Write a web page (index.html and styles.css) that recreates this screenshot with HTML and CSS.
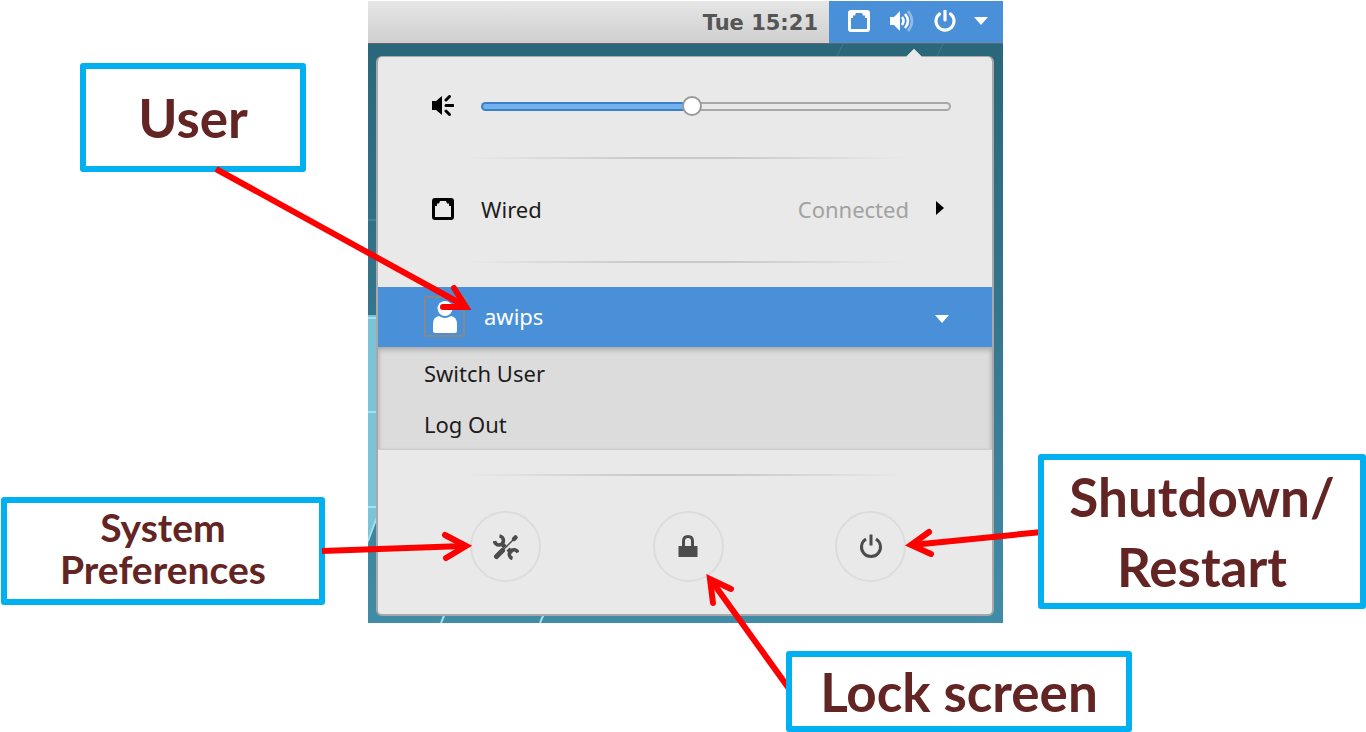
FILE: index.html
```html
<!DOCTYPE html>
<html lang="en">
<head>
<meta charset="utf-8">
<title>System menu</title>
<link rel="stylesheet" href="styles.css">
</head>
<body>
<main class="figure">
  <section class="screen">
    <header class="topbar">
      <time class="clock">Tue 15:21</time>
      <button class="tray" aria-label="System menu">
        <svg class="icon" viewBox="0 0 22 22"><rect x="1.5" y="1.5" width="19" height="19" rx="1.5" fill="none" stroke="#fff" stroke-width="3"/><path fill="#fff" d="M3 3h5l-1 2.500H5V8H3zM19 3h-5l1 2.500h2V8h2z"/></svg>
        <svg class="icon icon-volume" viewBox="0 0 24 22"><path fill="#fff" d="M0 7h4l6-6v20l-6-6H0z"/><g fill="none" stroke="#fff" stroke-width="2.600"><path d="M12 7q3 4 0 8"/><path d="M15 4q6 7 0 14"/><path d="M18 1q8 10 0 20" opacity=".4"/></g></svg>
        <svg class="icon" viewBox="0 0 22 22"><path fill="none" stroke="#fff" stroke-width="3.200" stroke-linecap="round" d="M11 1v9M5.500 4a9 9 0 1 0 11 0"/></svg>
        <svg class="caret" viewBox="0 0 14 8"><path fill="#fff" d="M0 0h14L7 8z"/></svg>
      </button>
    </header>
    <div class="desktop">
      <svg class="wallpaper" viewBox="0 0 635 579" preserveAspectRatio="none" aria-hidden="true">
        <defs>
          <linearGradient id="sea" x1="0" y1="0" x2="0" y2="1"><stop offset="0" stop-color="#2a677a"/><stop offset=".5" stop-color="#35778f"/><stop offset="1" stop-color="#418ca6"/></linearGradient>
        </defs>
        <rect width="635" height="579" fill="url(#sea)"/>
        <path fill="#7bc3d6" d="M0 271h12v190L0 500z"/>
        <path fill="none" stroke="#5391a7" d="M0 176h12"/>
        <path fill="none" stroke="#a0e2ee" stroke-width="2" d="M0 274h12M0 368h12M0 463h12M0 497l12-32M73 579l5-12M172 579l5-12"/>
        <path fill="none" stroke="#3b7d90" d="M469 12l6-12M569 12l6-12"/>
      </svg>
      <div class="menu">
        <div class="row row-sound">
          <svg class="icon" viewBox="0 0 22 22" aria-hidden="true"><path d="M0 6h4l6-5v19l-6-5H0z"/><path fill="none" stroke="#000" stroke-width="3" stroke-linecap="round" d="M14 5l3.500-3.500M14 10.500h7M14 16l3.500 3.500"/></svg>
          <input class="slider" type="range" min="0" max="1000" value="446" aria-label="Volume">
        </div>
        <hr class="divider">
        <button class="row row-network">
          <svg class="icon" viewBox="0 0 22 22" aria-hidden="true"><rect x="1.5" y="1.5" width="19" height="19" rx="1.5" fill="none" stroke="#000" stroke-width="3"/><path d="M3 3h5l-1 2.500H5V8H3zM19 3h-5l1 2.500h2V8h2z"/></svg>
          <span class="label">Wired</span>
          <span class="status">Connected</span>
          <svg class="arrow" viewBox="0 0 8 14" aria-hidden="true"><path d="M0 0l8 7-8 7z"/></svg>
        </button>
        <hr class="divider">
        <button class="row row-user" aria-expanded="true">
          <span class="avatar"><svg viewBox="0 0 26 32" aria-hidden="true"><circle cx="13" cy="7.500" r="7.500" fill="#fff"/><path fill="#fff" d="M1 30V23q0-7 6-8 6 4 12 0 6 1 6 8v7q0 2-2 2H3q-2 0-2-2z"/></svg></span>
          <span class="label">awips</span>
          <svg class="caret" viewBox="0 0 14 8" aria-hidden="true"><path fill="#fff" d="M0 0h14L7 8z"/></svg>
        </button>
        <div class="submenu">
          <button class="subitem">Switch User</button>
          <button class="subitem">Log Out</button>
        </div>
        <hr class="divider">
        <div class="actions">
          <button class="round" aria-label="System preferences">
            <svg viewBox="0 0 26 26"><g fill="none" stroke="#4c4c4c"><path stroke-width="5" stroke-linecap="round" d="M3.500 22.500l6-6"/><path stroke-width="1.500" d="M9 17L21 5"/><path stroke-width="4.500" stroke-linecap="round" d="M21 5l1.500-1.500"/><path stroke-width="4.500" d="M8 9l4 4M15 15l4 4"/><path stroke-width="3.600" d="M6.500 2A4.500 4.500 0 1 1 1.500 7M25 18.500A4.500 4.500 0 1 0 19.500 24.500"/></g></svg>
          </button>
          <button class="round" aria-label="Lock screen">
            <svg viewBox="0 0 26 26"><path fill="none" stroke="#4c4c4c" stroke-width="3" d="M8.500 13V7q0-4.500 4.500-4.500t4.500 4.500v6"/><rect x="3.500" y="12" width="19" height="11" rx=".5" fill="#4c4c4c"/></svg>
          </button>
          <button class="round" aria-label="Power off">
            <svg viewBox="0 0 26 26"><path fill="none" stroke="#4c4c4c" stroke-width="3" d="M13 .5v11M8 5a9.500 9.500 0 1 0 10 0"/></svg>
          </button>
        </div>
      </div>
      <svg class="pointer" viewBox="0 0 16 9" aria-hidden="true"><path fill="#e9e9e9" d="M0 9l8-8 8 8z"/><path fill="none" stroke="#c5cccc" d="M1 8l7-7 7 7"/></svg>
    </div>
  </section>

  <div class="callout callout-user">User</div>
  <div class="callout callout-prefs">System<br>Preferences</div>
  <svg class="arrows" viewBox="0 0 1366 732" preserveAspectRatio="none" aria-hidden="true">
    <g fill="none" stroke="#f00" stroke-width="6" stroke-linejoin="miter" stroke-miterlimit="10">
      <path d="M216 169L465 306M322 551L464 546M1042 532L912 545M790 690L711 580"/>
      <path stroke-linecap="round" d="M454 288L466 307L443 307M445 535L466 546L446 558M929 532L911 545L931 554M731 589L710 579L713 603"/>
    </g>
  </svg>
  <div class="callout callout-power">Shutdown/<br>Restart</div>
  <div class="callout callout-lock">Lock screen</div>
</main>
</body>
</html>
```

FILE: styles.css
```css
* { box-sizing: border-box; }

body {
  margin: 0;
  background: #fff;
  font-family: "Noto Sans", "Open Sans", sans-serif;
  font-size: 22px;
  color: #1c1c1c;
}

button {
  margin: 0;
  padding: 0;
  border: 0;
  background: none;
  font: inherit;
  color: inherit;
  text-align: left;
}

svg { display: block; flex: none; }

.figure {
  position: relative;
  display: grid;
  grid-template-columns: 368fr 635fr 363fr;
  align-items: start;
  min-height: 732px;
  overflow: hidden;
}

.screen { grid-column: 2; padding-top: 1px; }

/* Top bar */
.topbar {
  display: flex;
  align-items: stretch;
  justify-content: flex-end;
  height: 43px;
  background: linear-gradient(#e6e6e6, #cfcfcf);
  border-bottom: 1px solid #666;
}

.clock {
  padding-right: 11px;
  font: bold 21px/44px "DejaVu Sans", sans-serif;
  color: #555;
}

.tray {
  display: flex;
  align-items: center;
  gap: 20px;
  padding: 0 15px 2px 19px;
  background: #4a90d9;
}

.icon { width: 22px; height: 22px; }
.icon-volume { width: 24px; }
.tray .caret { margin-left: -2px; }
.caret { width: 14px; height: 8px; }

/* Desktop and menu */
.desktop {
  position: relative;
  padding: 12px 9px 7px 8px;
}

.wallpaper {
  position: absolute;
  inset: 0;
  width: 100%;
  height: 100%;
}

.pointer {
  position: absolute;
  top: 4px;
  right: 81px;
  width: 16px;
  height: 9px;
}

.menu {
  position: relative;
  border: 2px solid #a8a8a8;
  border-top-width: 1px;
  border-radius: 6px;
  background: #e9e9e9;
  overflow: hidden;
}

.row {
  display: flex;
  align-items: center;
  width: 100%;
  padding: 0 41px 0 54px;
}

.row-sound { height: 100px; gap: 27px; padding-bottom: 2px; }
.row-network { height: 102px; gap: 27px; padding-right: 48px; padding-bottom: 2px; }
.arrow { width: 8px; height: 14px; margin-bottom: 2px; }
.label { flex: 1; }
.status { color: #a2a2a2; }

.divider {
  height: 2px;
  margin: 0 86px;
  border: 0;
  background: linear-gradient(90deg, transparent, #c9c9c9 40%, #c9c9c9 60%, transparent);
}

.slider {
  flex: 1;
  min-width: 0;
  height: 20px;
  margin: 0;
  appearance: none;
  background: none;
}

.slider::-webkit-slider-runnable-track {
  height: 9px;
  border: 2px solid transparent;
  border-radius: 5px;
  background:
    linear-gradient(90deg, #73b1ee 45%, #e9e9e9 45%) padding-box,
    linear-gradient(90deg, #3d80ca 45%, #a8a8a8 45%) border-box;
}

.slider::-webkit-slider-thumb {
  appearance: none;
  width: 20px;
  height: 20px;
  margin-top: -8px;
  border: 2px solid #999;
  border-radius: 50%;
  background: #fff;
}

.row-user {
  height: 60px;
  margin-top: 24px;
  padding: 0 43px 2px 46px;
  gap: 19px;
  background: #4a90d9;
  color: #fff;
}

.avatar {
  display: flex;
  align-items: flex-end;
  justify-content: center;
  width: 41px;
  height: 41px;
  padding-bottom: 2px;
  border: 2px solid #84898e;
}

.avatar svg { width: 26px; height: 32px; }
.row-user .caret { margin-top: 6px; }

.submenu {
  margin-bottom: 24px;
  border-bottom: 1px solid #cdcdcd;
  background: #dcdcdc;
  box-shadow: inset 0 5px 5px -2px #aaa, inset 3px 0 3px -1px #c4c4c4, inset -3px 0 3px -1px #c4c4c4;
}

.subitem {
  display: block;
  width: 100%;
  height: 51px;
  padding-left: 46px;
}

.actions {
  display: flex;
  justify-content: space-between;
  padding: 35px 86px 32px 92px;
}

.round {
  display: grid;
  place-items: center;
  width: 71px;
  height: 71px;
  border: 2px solid #dcdcdc;
  border-radius: 50%;
}

.round svg { width: 26px; height: 26px; }

/* Annotations */
.arrows {
  position: absolute;
  inset: 0;
  width: 100%;
  height: 732px;
}

.callout {
  position: absolute;
  display: grid;
  place-items: center;
  border: 6px solid #00b0f0;
  border-radius: 3px;
  background: #fff;
  font: bold 53px/70px Lato, sans-serif;
  color: #632523;
  text-align: center;
  white-space: nowrap;
}

.callout-user { left: 5.86%; top: 63px; width: 16.54%; height: 109px; }
.callout-prefs { left: 0.07%; top: 497px; width: 23.72%; height: 108px; padding-bottom: 6px; font-size: 39px; line-height: 42px; }
.callout-power { left: 75.99%; top: 454px; width: 24.01%; height: 155px; }
.callout-lock { left: 57.54%; top: 651px; width: 25.33%; height: 81px; }
```
